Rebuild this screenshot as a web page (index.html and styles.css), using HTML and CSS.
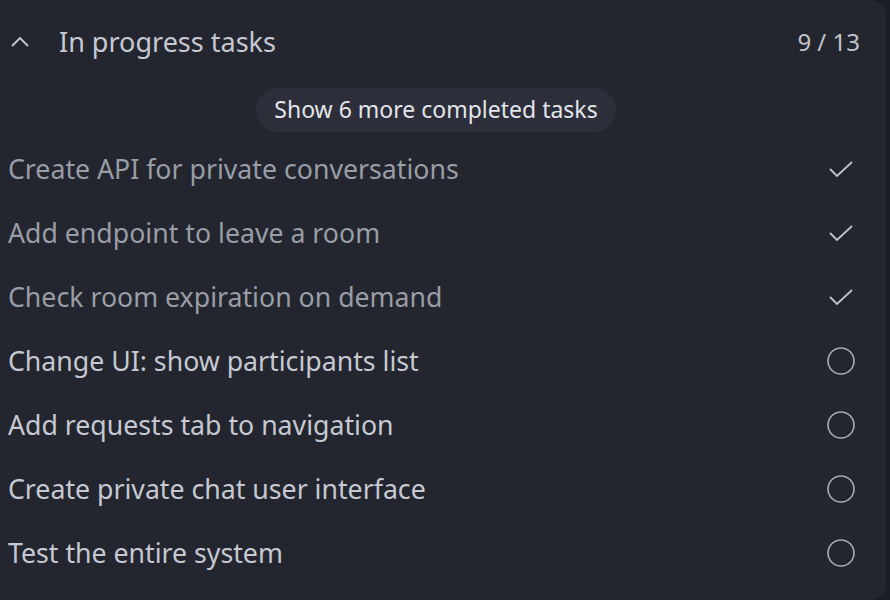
FILE: index.html
```html
<!DOCTYPE html>
<html>
<head>
<meta charset="utf-8">
<link rel="stylesheet" href="styles.css">
</head>
<body>
<div class="panel">
  <div class="header">
    <svg class="chev" width="20" height="12" viewBox="0 0 20 12"><path d="M2 10 L10 2 L18 10" fill="none" stroke="#c7cad2" stroke-width="1.8"/></svg>
    <span class="title">In progress tasks</span>
    <span class="count">9 / 13</span>
  </div>
  <div class="more-row"><button class="more">Show 6 more completed tasks</button></div>
  <ul class="tasks">
    <li class="task done"><span>Create API for private conversations</span><svg class="icon" width="28" height="28" viewBox="0 0 28 28"><path d="M3 14 L10 21 L25 7" fill="none" stroke="#c0c3cb" stroke-width="1.8"/></svg></li>
    <li class="task done"><span>Add endpoint to leave a room</span><svg class="icon" width="28" height="28" viewBox="0 0 28 28"><path d="M3 14 L10 21 L25 7" fill="none" stroke="#c0c3cb" stroke-width="1.8"/></svg></li>
    <li class="task done"><span>Check room expiration on demand</span><svg class="icon" width="28" height="28" viewBox="0 0 28 28"><path d="M3 14 L10 21 L25 7" fill="none" stroke="#c0c3cb" stroke-width="1.8"/></svg></li>
    <li class="task"><span>Change UI: show participants list</span><svg class="icon" width="28" height="28" viewBox="0 0 28 28"><circle cx="14" cy="14" r="13" fill="none" stroke="#a7abb4" stroke-width="1.6"/></svg></li>
    <li class="task"><span>Add requests tab to navigation</span><svg class="icon" width="28" height="28" viewBox="0 0 28 28"><circle cx="14" cy="14" r="13" fill="none" stroke="#a7abb4" stroke-width="1.6"/></svg></li>
    <li class="task"><span>Create private chat user interface</span><svg class="icon" width="28" height="28" viewBox="0 0 28 28"><circle cx="14" cy="14" r="13" fill="none" stroke="#a7abb4" stroke-width="1.6"/></svg></li>
    <li class="task"><span>Test the entire system</span><svg class="icon" width="28" height="28" viewBox="0 0 28 28"><circle cx="14" cy="14" r="13" fill="none" stroke="#a7abb4" stroke-width="1.6"/></svg></li>
  </ul>
</div>
</body>
</html>
```
FILE: styles.css
```css
html, body { margin: 0; padding: 0; }
body {
  background: #1c1e25;
  font-family: "Noto Sans", "Open Sans", sans-serif;
  width: 890px;
  height: 600px;
  overflow: hidden;
}
.panel {
  width: 886px;
  height: 600px;
  background: #23262f;
  border-radius: 0 16px 16px 0;
  box-sizing: border-box;
}
.header {
  display: flex;
  align-items: center;
  height: 84px;
  padding: 0 26px 2px 10px;
  box-sizing: border-box;
}
.chev { flex: none; margin-top: 2px; }
.title {
  margin-left: 29px;
  font-size: 27px;
  color: #c6c9d1;
  flex: 1;
}
.count {
  font-size: 24px;
  color: #c0c3cb;
}
.more-row {
  display: flex;
  justify-content: center;
  margin-top: 4px;
}
.more {
  background: #2c2f39;
  border: none;
  border-radius: 22px;
  height: 44px;
  padding: 0 18px 2px;
  font-family: inherit;
  font-size: 23px;
  color: #e3e5ea;
  margin-left: -14px;
}
.tasks {
  list-style: none;
  margin: 5px 0 0;
  padding: 0 31px 0 8px;
}
.task {
  display: flex;
  align-items: center;
  justify-content: space-between;
  height: 64px;
  font-size: 26.7px;
  color: #c6c9d1;
}
.task span { margin-top: -2px; }
.task.done { color: #999da6; }
.icon { flex: none; }
```
